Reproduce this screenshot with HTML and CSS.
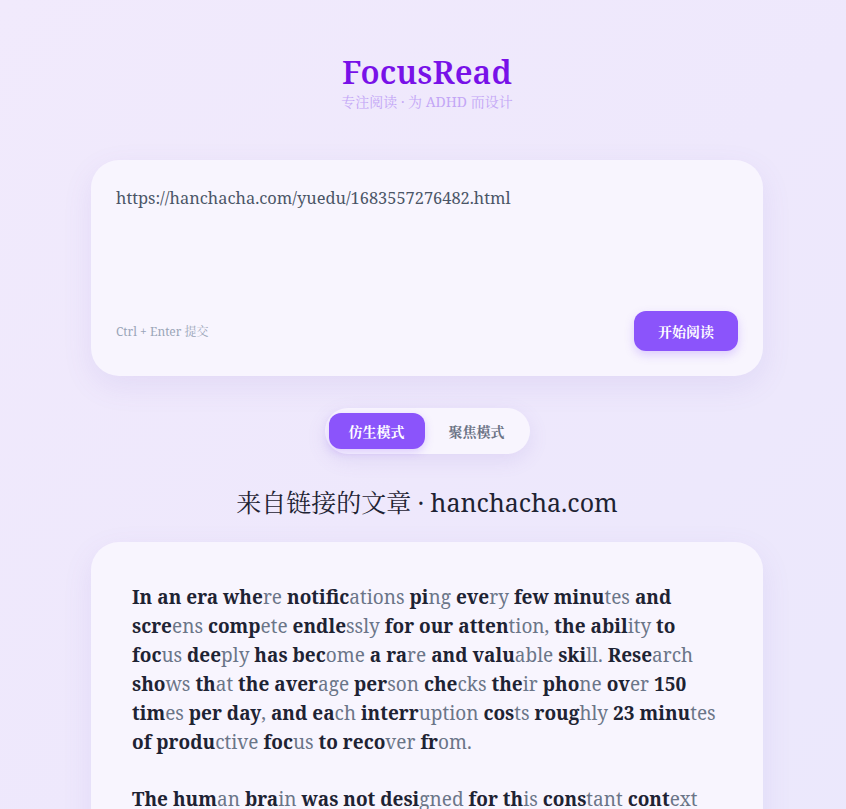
FILE: index.html
```html
<!DOCTYPE html>
<html lang="zh-CN">
<head>
<meta charset="utf-8">
<title>FocusRead</title>
<link rel="stylesheet" href="styles.css">
</head>
<body>
<div class="page">
  <header class="brand">
    <h1 class="logo">FocusRead</h1>
    <p class="tagline">专注阅读 · 为 ADHD 而设计</p>
  </header>

  <section class="input-card">
    <div class="url-input">https://hanchacha.com/yuedu/1683557276482.html</div>
    <div class="input-footer">
      <span class="hint">Ctrl + Enter 提交</span>
      <button class="start-btn">开始阅读</button>
    </div>
  </section>

  <div class="mode-toggle">
    <button class="mode active">仿生模式</button>
    <button class="mode">聚焦模式</button>
  </div>

  <h2 class="article-title">来自链接的文章 · hanchacha.com</h2>

  <article class="article-card">
    <p><b>In</b> <b>an</b> <b>era</b> <b>whe</b><i>re</i> <b>notific</b><i>ations</i> <b>pi</b><i>ng</i> <b>eve</b><i>ry</i> <b>few</b> <b>minu</b><i>tes</i> <b>and</b> <b>scre</b><i>ens</i> <b>comp</b><i>ete</i> <b>endle</b><i>ssly</i> <b>for</b> <b>our</b> <b>atten</b><i>tion,</i> <b>the</b> <b>abil</b><i>ity</i> <b>to</b> <b>foc</b><i>us</i> <b>dee</b><i>ply</i> <b>has</b> <b>bec</b><i>ome</i> <b>a</b> <b>ra</b><i>re</i> <b>and</b> <b>valu</b><i>able</i> <b>ski</b><i>ll.</i> <b>Rese</b><i>arch</i> <b>sho</b><i>ws</i> <b>th</b><i>at</i> <b>the</b> <b>aver</b><i>age</i> <b>per</b><i>son</i> <b>che</b><i>cks</i> <b>the</b><i>ir</i> <b>pho</b><i>ne</i> <b>ov</b><i>er</i> <b>150</b> <b>tim</b><i>es</i> <b>per</b> <b>day</b><i>,</i> <b>and</b> <b>ea</b><i>ch</i> <b>interr</b><i>uption</i> <b>cos</b><i>ts</i> <b>roug</b><i>hly</i> <b>23</b> <b>minu</b><i>tes</i> <b>of</b> <b>produ</b><i>ctive</i> <b>foc</b><i>us</i> <b>to</b> <b>reco</b><i>ver</i> <b>fr</b><i>om.</i></p>
    <p><b>The</b> <b>hum</b><i>an</i> <b>bra</b><i>in</i> <b>was</b> <b>not</b> <b>desi</b><i>gned</i> <b>for</b> <b>th</b><i>is</i> <b>cons</b><i>tant</i> <b>cont</b><i>ext</i> <b>swi</b><i>tching.</i> <b>Eve</b><i>ry</i> <b>tim</b><i>e</i> <b>we</b> <b>shi</b><i>ft</i> <b>our</b> <b>atten</b><i>tion,</i> <b>the</b> <b>mi</b><i>nd</i> <b>pa</b><i>ys</i> <b>a</b> <b>co</b><i>st.</i></p>
  </article>
</div>
</body>
</html>
```

FILE: styles.css
```css
* {
  box-sizing: border-box;
}

html, body {
  margin: 0;
  padding: 0;
}

body {
  min-height: 100vh;
  padding-left: 8px;
  background: linear-gradient(135deg, #f1eafc 0%, #eee8fc 50%, #ebe8fc 100%);
  font-family: "Noto Serif", "Noto Serif CJK SC", "Liberation Serif", serif;
  color: #1e293b;
}

.page {
  width: 672px;
  margin: 0 auto;
  padding-top: 52px;
  display: flex;
  flex-direction: column;
  align-items: stretch;
}

.brand {
  text-align: center;
}

.logo {
  margin: 0;
  font-size: 32px;
  line-height: 40px;
  font-weight: 600;
  color: #7811e8;
  letter-spacing: 0.1px;
}

.tagline {
  margin: 0;
  font-size: 14px;
  line-height: 20px;
  color: #c3a6f6;
}

.input-card {
  margin-top: 48px;
  height: 216px;
  background: #f8f5fe;
  border-radius: 28px;
  box-shadow: 0 10px 30px rgba(120, 90, 200, 0.10);
  padding: 26px 25px 25px 25px;
  display: flex;
  flex-direction: column;
}

.url-input {
  flex: 1;
  font-size: 16.4px;
  line-height: 24px;
  color: #4b5567;
}

.input-footer {
  display: flex;
  justify-content: space-between;
  align-items: center;
}

.hint {
  font-size: 12px;
  color: #9aa5b8;
}

.start-btn {
  width: 104px;
  height: 40px;
  border: none;
  border-radius: 12px;
  background: #8b54fb;
  color: #ffffff;
  font-family: inherit;
  font-size: 14px;
  font-weight: 700;
  box-shadow: 0 4px 10px rgba(139, 84, 251, 0.25);
}

.mode-toggle {
  align-self: center;
  margin-top: 32px;
  display: flex;
  gap: 4px;
  padding: 5px 5px 5px 4px;
  background: #f8f5fe;
  border-radius: 23px;
  box-shadow: 0 6px 20px rgba(120, 90, 200, 0.12);
}

.mode {
  width: 96px;
  height: 36px;
  border: none;
  border-radius: 12px;
  background: transparent;
  color: #6b7385;
  font-family: inherit;
  font-size: 14px;
  font-weight: 700;
}

.mode.active {
  background: #8b54fb;
  color: #ffffff;
  box-shadow: 0 3px 8px rgba(139, 84, 251, 0.25);
}

.article-title {
  margin: 32px 0 0 0;
  text-align: center;
  font-size: 25px;
  line-height: 32px;
  font-weight: 400;
  color: #1e2333;
}

.article-card {
  margin-top: 24px;
  background: #f8f5fe;
  border-radius: 28px;
  box-shadow: 0 10px 30px rgba(120, 90, 200, 0.10);
  padding: 41px 40px 40px 41px;
}

.article-card p {
  margin: 0 0 28px 0;
  font-size: 19px;
  line-height: 29px;
  color: #1e2333;
}

.article-card b {
  font-weight: 700;
  color: #1e2333;
}

.article-card i {
  font-style: normal;
  font-weight: 400;
  color: #6b7588;
}
```
